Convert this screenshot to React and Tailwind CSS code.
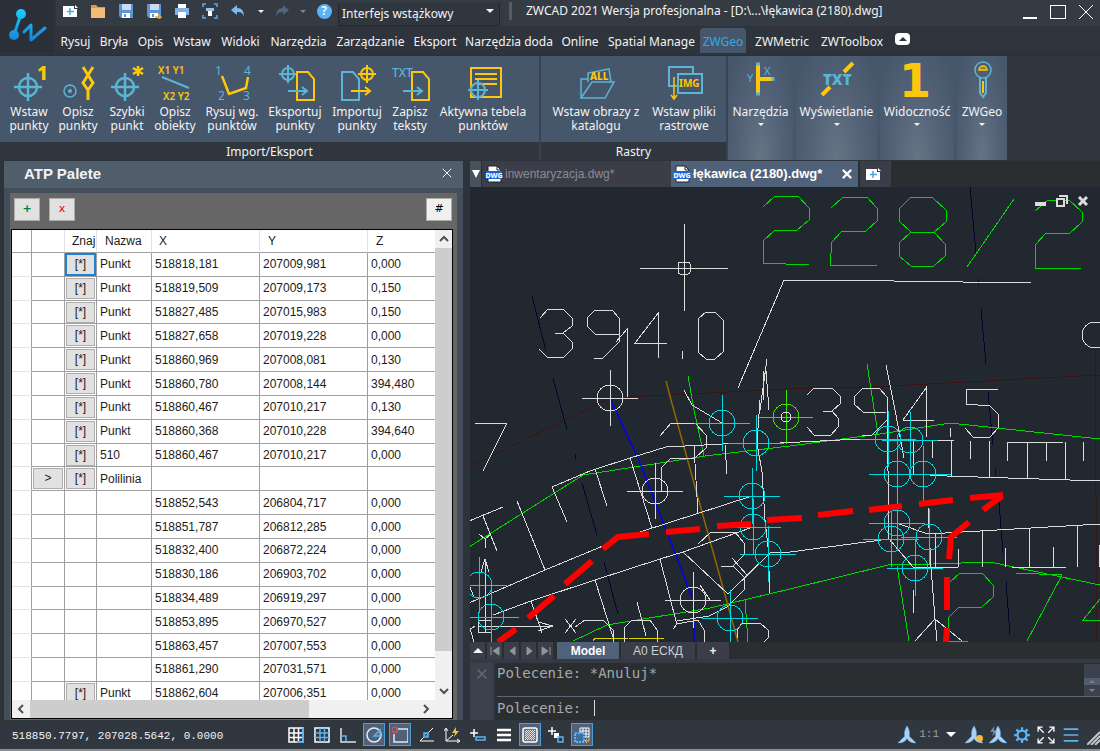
import { useState } from "react";
import clsx from "clsx";
import { Menu, X } from "lucide-react";

const BLUE = "#5bb5d5";
const GOLD = "#fdc70c";

const menuTabs = [
  { label: "Rysuj", width: "w-[39px]" },
  { label: "Bryła", width: "w-[38px]" },
  { label: "Opis", width: "w-[35px]" },
  { label: "Wstaw", width: "w-[48px]" },
  { label: "Widoki", width: "w-[49px]" },
  { label: "Narzędzia", width: "w-[67px]" },
  { label: "Zarządzanie", width: "w-[77px]" },
  { label: "Eksport", width: "w-[52px]" },
  { label: "Narzędzia doda", width: "w-[96px]" },
  { label: "Online", width: "w-[46px]" },
  { label: "Spatial Manage", width: "w-[97px]" },
  { label: "ZWGeo", width: "w-[46px]" },
  { label: "ZWMetric", width: "w-[72px]" },
  { label: "ZWToolbox", width: "w-[68px]" },
];

const rows = [
  ["Punkt", "518818,181", "207009,981", "0,000"],
  ["Punkt", "518819,509", "207009,173", "0,150"],
  ["Punkt", "518827,485", "207015,983", "0,150"],
  ["Punkt", "518827,658", "207019,228", "0,000"],
  ["Punkt", "518860,969", "207008,081", "0,130"],
  ["Punkt", "518860,780", "207008,144", "394,480"],
  ["Punkt", "518860,467", "207010,217", "0,130"],
  ["Punkt", "518860,368", "207010,228", "394,640"],
  ["510", "518860,467", "207010,217", "0,000"],
  ["Polilinia", "", "", ""],
  ["", "518852,543", "206804,717", "0,000"],
  ["", "518851,787", "206812,285", "0,000"],
  ["", "518832,400", "206872,224", "0,000"],
  ["", "518830,186", "206903,702", "0,000"],
  ["", "518834,489", "206919,297", "0,000"],
  ["", "518853,895", "206970,527", "0,000"],
  ["", "518863,457", "207007,553", "0,000"],
  ["", "518861,290", "207031,571", "0,000"],
  ["Punkt", "518862,604", "207006,351", "0,000"],
];

function Target({ x, y, r, arm, color = BLUE, width = 2 }) {
  return (
    <g stroke={color} strokeWidth={width} fill="none">
      <circle cx={x} cy={y} r={r} />
      <path d={`M${x - arm} ${y}H${x + arm}M${x} ${y - arm}V${y + arm}`} />
    </g>
  );
}

function Doc({ x, color }) {
  return <path d={`M${x} 8h11l6 7v21h-17z`} stroke={color} strokeWidth="2" fill="none" />;
}

function Arrow({ x, y, color }) {
  return (
    <path
      d={`M${x} ${y}h19m-5 -4l5 4l-5 4`}
      stroke={color}
      strokeWidth="2"
      fill="none"
    />
  );
}

function RibbonIcon({ children, height = 38 }) {
  return (
    <svg
      width="40"
      height={height}
      viewBox={`0 0 40 ${height}`}
      className="shrink-0 overflow-visible font-['Noto_Sans',sans-serif]"
      aria-hidden="true"
    >
      {children}
    </svg>
  );
}

const importTools = [
  {
    lines: ["Wstaw", "punkty"],
    width: "w-12",
    icon: (
      <>
        <Target x={19} y={23} r={9} arm={14} width={2.5} />
        <text x="28" y="16" fontSize="19" fontWeight="800" fill={GOLD}>1</text>
      </>
    ),
  },
  {
    lines: ["Opisz", "punkty"],
    width: "w-[50px]",
    icon: (
      <>
        <circle cx="12" cy="27" r="6" fill="none" stroke={BLUE} strokeWidth="1.5" />
        <circle cx="12" cy="27" r="2" fill={BLUE} />
        <path
          d="M25 3l5 8l5 -8M30 11l-5 8l5 7l5 -7zM30 26v10"
          fill="none"
          stroke={GOLD}
          strokeWidth="3"
        />
      </>
    ),
  },
  {
    lines: ["Szybki", "punkt"],
    width: "w-12",
    icon: (
      <>
        <Target x={18} y={23} r={9} arm={14} width={2.5} />
        <path d="M31 2v10M26 4l10 6M36 4l-10 6" stroke={GOLD} strokeWidth="2.5" />
      </>
    ),
  },
  {
    lines: ["Opisz", "obiekty"],
    width: "w-12",
    icon: (
      <>
        <text x="3" y="10" fontSize="10" fontWeight="600" fill={GOLD}>X1 Y1</text>
        <path d="M7 13l27 11" stroke={BLUE} strokeWidth="2" />
        <text x="8" y="36" fontSize="10" fontWeight="600" fill={GOLD}>X2 Y2</text>
      </>
    ),
  },
  {
    lines: ["Rysuj wg.", "punktów"],
    width: "w-[66px]",
    icon: (
      <>
        <path d="M10 12l7 18l17 -6l2 -11" fill="none" stroke={GOLD} strokeWidth="2.5" />
        <g fontSize="12" fill={BLUE}>
          <text x="3" y="11">1</text>
          <text x="32" y="11">4</text>
          <text x="6" y="36">2</text>
          <text x="31" y="36">3</text>
        </g>
      </>
    ),
  },
  {
    lines: ["Eksportuj", "punkty"],
    width: "w-[60px]",
    icon: (
      <>
        <Target x={13} y={10} r={6} arm={9} />
        <Doc x={22} color={GOLD} />
        <Arrow x={13} y={27} color={BLUE} />
      </>
    ),
  },
  {
    lines: ["Importuj", "punkty"],
    width: "w-16",
    icon: (
      <>
        <Doc x={5} color={BLUE} />
        <Target x={30} y={10} r={6} arm={9} color={GOLD} />
        <Arrow x={14} y={27} color={GOLD} />
      </>
    ),
  },
  {
    lines: ["Zapisz", "teksty"],
    width: "w-[42px]",
    icon: (
      <>
        <text x="2" y="13" fontSize="12" fontWeight="500" fill={BLUE}>TXT</text>
        <Doc x={22} color={GOLD} />
        <Arrow x={13} y={27} color={BLUE} />
      </>
    ),
  },
  {
    lines: ["Aktywna tebela", "punktów"],
    width: "w-[104px]",
    icon: (
      <>
        <path d="M8 4h30v29h-30zM12 10h22M12 15h22M16 20h18" fill="none" stroke={GOLD} strokeWidth="2" />
        <Target x={15} y={26} r={7} arm={10} />
      </>
    ),
  },
];

const rasterTools = [
  {
    lines: ["Wstaw obrazy z", "katalogu"],
    width: "w-[100px]",
    icon: (
      <>
        <path
          d="M12 18V9l21 -4l2 13M5 34V15h7M5 34l11 -16h22l-9 16z"
          fill="none"
          stroke={BLUE}
          strokeWidth="1.5"
        />
        <text x="14" y="16" fontSize="10" fontWeight="800" fill={GOLD}>ALL</text>
      </>
    ),
  },
  {
    lines: ["Wstaw pliki", "rastrowe"],
    width: "w-[76px]",
    icon: (
      <>
        <path d="M14 22h-9v-19h24v7M14 10h24v19h-24z" fill="none" stroke={BLUE} strokeWidth="2" />
        <text x="15" y="23" fontSize="10" fontWeight="700" fill={GOLD}>IMG</text>
        <path d="M10 13v22m-3 -4l3 4l3 -4" fill="none" stroke={GOLD} strokeWidth="1.5" />
      </>
    ),
  },
];

const collapsedPanels = [
  {
    label: "Narzędzia",
    width: "w-[65px]",
    icon: (
      <>
        <path d="M17 1v32M17 17h16" stroke={GOLD} strokeWidth="4" />
        <path d="M15 2h4M15 32h4M32 15v4" stroke={BLUE} strokeWidth="3" />
        <g fontSize="11" fill={BLUE}>
          <text x="6" y="20">Y</text>
          <text x="23" y="13">X</text>
        </g>
      </>
    ),
  },
  {
    label: "Wyświetlanie",
    width: "w-[81px]",
    icon: (
      <>
        <path d="M5 33l8 -8M27 10l9 -9" stroke={GOLD} strokeWidth="4" />
        <text x="6" y="23" fontSize="15" fontWeight="900" fill={BLUE}>TXT</text>
      </>
    ),
  },
  {
    label: "Widoczność",
    width: "w-[74px]",
    icon: (
      <text
        x="18"
        y="35"
        textAnchor="middle"
        fontSize="46"
        fontWeight="700"
        fill={GOLD}
        className="font-['DejaVu_Sans',sans-serif]"
      >
        1
      </text>
    ),
  },
  {
    label: "ZWGeo",
    width: "w-[50px]",
    icon: (
      <>
        <circle cx="21" cy="8" r="8" fill="none" stroke={BLUE} strokeWidth="1.5" />
        <path d="M17 8a4 4 0 0 1 8 0z" fill="#8a7f3c" stroke={GOLD} strokeWidth="1.5" />
        <path d="M18 16v15l3 4l3 -4V16" fill="none" stroke={BLUE} strokeWidth="2" />
        <path d="M21 19v12" stroke={GOLD} strokeWidth="2" />
      </>
    ),
  },
];

function ToolButton({ tool }) {
  return (
    <button className={clsx("flex shrink-0 flex-col items-center pt-2", tool.width)}>
      <RibbonIcon>{tool.icon}</RibbonIcon>
      <span className="mt-[3px] whitespace-nowrap text-xs leading-[14px]">
        {tool.lines[0]}
        <br />
        {tool.lines[1]}
      </span>
    </button>
  );
}

function RibbonPanel({ title, tools, className }) {
  return (
    <section className={clsx("flex flex-col border-r-2 border-[#39434f]", className)}>
      <div className="flex h-[86px] bg-[#46566b] px-[5px]">
        {tools.map((tool) => (
          <ToolButton key={tool.lines.join(" ")} tool={tool} />
        ))}
      </div>
      <h2 className="flex h-[18px] items-center justify-center bg-[#31373f] pt-[2px] text-xs">{title}</h2>
    </section>
  );
}

function Caret({ className, size = 8 }) {
  return (
    <svg width={size} height={size / 2} viewBox="0 0 8 4" className={className} aria-hidden="true">
      <path d="M0 0h8l-4 4z" fill="currentColor" />
    </svg>
  );
}

function QuickButton({ label, width = "w-7", children }) {
  return (
    <button aria-label={label} className={clsx("flex h-[22px] shrink-0 items-center justify-center", width)}>
      {children}
    </button>
  );
}

function Glyph({ children, size = 16 }) {
  return (
    <svg width={size} height={size} viewBox="0 0 16 16" fill="none" aria-hidden="true">
      {children}
    </svg>
  );
}

function NewFile() {
  return (
    <Glyph>
      <path d="M1 3h11v3h3v8H1z" fill="#fff" />
      <path d="M13 2l3 3h-3z" fill="#fff" />
      <path d="M8 5v7M5 8.500h7" stroke="#4aa5e8" strokeWidth="1.5" />
    </Glyph>
  );
}

function Floppy({ arrow }) {
  return (
    <Glyph>
      <path d="M1 1h14v14H3l-2 -2z" fill="#5c95d6" />
      <path d="M4 1h9v6H4z" fill="#c9dcf3" />
      <path d="M4 10h8v5H4z" fill="#fff" />
      <path d="M6 11h2v3H6z" fill="#5c95d6" />
      {arrow && <path d="M9 14h6m-3 -3l3 3l-3 3" stroke="#e0ad4a" strokeWidth="1.5" />}
    </Glyph>
  );
}

function Logo() {
  return (
    <svg width="54" height="52" viewBox="0 0 54 52" className="shrink-0 bg-[#2b3038]" aria-label="ZWCAD">
      <defs>
        <linearGradient id="logo" x1="0" y1="8" x2="0" y2="42" gradientUnits="userSpaceOnUse">
          <stop offset="0" stopColor="#14d4fb" />
          <stop offset="1" stopColor="#1b7fd6" />
        </linearGradient>
      </defs>
      <path
        d="M21 14L14 35M24 32l7 -7v15l14 -12"
        stroke="url(#logo)"
        strokeWidth="3"
        strokeLinecap="round"
        strokeLinejoin="round"
        fill="none"
      />
      <circle cx="21" cy="14" r="5" fill="url(#logo)" />
      <circle cx="14" cy="35" r="5" fill="url(#logo)" />
    </svg>
  );
}

function TitleBar() {
  return (
    <div className="flex h-[26px] bg-[#353b43]">
      <QuickButton label="Nowy"><NewFile /></QuickButton>
      <QuickButton label="Otwórz">
        <Glyph>
          <path d="M1 2h5l2 2h7v11H1z" fill="#d99a4e" />
          <path d="M1 5h14v10H1z" fill="#f6bb76" />
        </Glyph>
      </QuickButton>
      <QuickButton label="Zapisz"><Floppy /></QuickButton>
      <QuickButton label="Zapisz jako"><Floppy arrow /></QuickButton>
      <QuickButton label="Drukuj">
        <Glyph>
          <path d="M4 1h8v4H4z" fill="#fff" />
          <path d="M1 5h14v7H1z" fill="#7fb2e6" />
          <path d="M4 9h8v6H4z" fill="#fff" />
        </Glyph>
      </QuickButton>
      <QuickButton label="Podgląd wydruku">
        <Glyph>
          <path d="M1 4V1h3M12 1h3v3M15 12v3h-3M4 15H1v-3" stroke="#5da8e6" strokeWidth="1.5" />
          <path d="M4 5h8v3H4z" fill="#9cc4ea" />
          <path d="M6 8h4v5H6z" fill="#fff" />
        </Glyph>
      </QuickButton>
      <QuickButton label="Cofnij">
        <Glyph>
          <path d="M7 2v3c5 0 7 3 7 9c-1 -4 -3 -5 -7 -5v3L1 7z" fill="#7cb8f2" />
        </Glyph>
      </QuickButton>
      <QuickButton label="Lista cofania" width="w-[18px]"><Caret size={6} /></QuickButton>
      <QuickButton label="Ponów" width="w-6">
        <Glyph>
          <path d="M9 2v3c-5 0 -7 3 -7 9c1 -4 3 -5 7 -5v3l6 -5z" fill="#4e6580" />
        </Glyph>
      </QuickButton>
      <QuickButton label="Lista ponawiania" width="w-[18px]">
        <Caret size={6} className="text-[#7d838b]" />
      </QuickButton>
      <QuickButton label="Pomoc" width="w-6">
        <span className="flex h-[15px] w-[15px] items-center justify-center rounded-full bg-[#5cb2f5] text-xs font-bold">?</span>
      </QuickButton>
      <div className="relative ml-[2px] w-[162px] shrink-0">
        <select
          aria-label="Obszar roboczy"
          className="h-[23px] w-full appearance-none border border-t-0 border-[#23272d] bg-[#30363e] pl-[3px] text-xs outline-none"
        >
          <option>Interfejs wstążkowy</option>
        </select>
        <Caret className="pointer-events-none absolute top-[9px] right-[6px]" />
      </div>
      <span className="mt-[2px] ml-[9px] h-[18px] w-[3px] shrink-0 bg-[#565c64]" />
      <h1 className="ml-[14px] truncate text-xs leading-[22px]">
        ZWCAD 2021 Wersja profesjonalna - [D:\...\łękawica (2180).dwg]
      </h1>
      <div className="ml-auto flex h-[22px] shrink-0 items-center gap-[13px] pr-[7px] pt-[2px]">
        <button aria-label="Minimalizuj" className="h-[14px] w-[14px] border-b-2 border-white" />
        <button aria-label="Maksymalizuj" className="h-[14px] w-4 border border-white" />
        <button aria-label="Zamknij">
          <svg width="14" height="14" viewBox="0 0 14 14" aria-hidden="true">
            <path d="M0 0l14 14M14 0L0 14" stroke="#fff" />
          </svg>
        </button>
      </div>
    </div>
  );
}

function MenuBar({ active, onSelect }) {
  return (
    <nav className="flex h-[29px] items-center bg-[#2f343c] text-xs">
      {menuTabs.map((tab) => (
        <button
          key={tab.label}
          onClick={() => onSelect(tab.label)}
          className={clsx(
            "flex h-[25px] shrink-0 items-center justify-center whitespace-nowrap pt-[2px]",
            tab.width,
            tab.label === active && "rounded-t-sm bg-[#46566b] text-[#35a8e8]"
          )}
        >
          {tab.label}
        </button>
      ))}
      <button
        aria-label="Zwiń wstążkę"
        className="mb-[3px] ml-[9px] flex h-3 w-[15px] items-center justify-center rounded-sm bg-white text-[#2f343c]"
      >
        <Caret className="rotate-180" />
      </button>
    </nav>
  );
}

function Ribbon() {
  return (
    <div className="flex h-[105px] shrink-0 border-t border-[#2b3038] bg-[#31373f]">
      <RibbonPanel title="Import/Eksport" tools={importTools} className="w-[541px] shrink-0" />
      <RibbonPanel title="Rastry" tools={rasterTools} className="w-[187px] shrink-0" />
      <div className="flex gap-[3px] bg-[#46566b]">
        {collapsedPanels.map((panel) => (
          <button
            key={panel.label}
            className={clsx(
              "flex flex-col items-center bg-[radial-gradient(ellipse_at_bottom,#667485_0%,#526176_50%,#46566b_90%)] pt-[6px]",
              panel.width
            )}
          >
            <RibbonIcon height={40}>{panel.icon}</RibbonIcon>
            <span className="mt-[3px] whitespace-nowrap text-xs leading-[14px]">{panel.label}</span>
            <Caret size={6} className="mt-1" />
          </button>
        ))}
      </div>
    </div>
  );
}

function CellButton({ children, focused, label }) {
  return (
    <button
      aria-label={label}
      className={clsx(
        "block h-[21px] w-full border bg-[#e1e1e1] text-center leading-[19px]",
        focused ? "border-[#1f7fd0] outline outline-[#1f7fd0]" : "border-[#adadad]"
      )}
    >
      {children}
    </button>
  );
}

function PointTable() {
  const cell = "border-r border-b border-[#a0a0a0] p-0 pl-[3px]";
  return (
    <table className="h-[476px] w-full table-fixed border-separate border-spacing-0 text-left text-[#1c1c1c]">
      <colgroup>
        <col className="w-5" />
        <col className="w-[33px]" />
        <col className="w-8" />
        <col className="w-[55px]" />
        <col className="w-[108px]" />
        <col className="w-[108px]" />
        <col />
      </colgroup>
      <thead>
        <tr className="h-[23px] [&>th]:border-b [&>th]:border-[#a0a0a0] [&>th]:p-0 [&>th]:font-normal">
          <th className="border-r" />
          <th className="border-r border-r-[#e3e3e3]!" />
          <th className="overflow-hidden border-r border-r-[#e3e3e3]! pl-[7px]! whitespace-nowrap">Znaj</th>
          <th className="border-r border-r-[#e3e3e3]! pl-2!">Nazwa</th>
          <th className="border-r border-r-[#e3e3e3]! pl-[7px]!">X</th>
          <th className="border-r border-r-[#e3e3e3]! pl-2!">Y</th>
          <th className="pl-2!">Z</th>
        </tr>
      </thead>
      <tbody>
        {rows.map(([name, x, y, z], i) => (
          <tr key={i} className="h-[23px]">
            <td className="border-r border-b border-r-[#a0a0a0] border-b-[#e3e3e3] p-0" />
            <td className="border-r border-b border-[#a0a0a0] p-0 px-[1px]">
              {name === "Polilinia" && <CellButton label="Rozwiń">&gt;</CellButton>}
            </td>
            <td className="border-r border-b border-[#a0a0a0] p-0 px-[1px]">
              {name && <CellButton focused={i === 0} label="Znajdź">[*]</CellButton>}
            </td>
            <td className={cell}>{name}</td>
            <td className={cell}>{x}</td>
            <td className={cell}>{y}</td>
            <td className="border-b border-[#a0a0a0] p-0 pl-[3px]">{z}</td>
          </tr>
        ))}
      </tbody>
    </table>
  );
}

function Chevron({ turn }) {
  return (
    <svg width="10" height="10" viewBox="0 0 10 10" className={turn} aria-hidden="true">
      <path d="M1 7l4 -4l4 4" stroke="#505050" strokeWidth="2" fill="none" />
    </svg>
  );
}

function Palette() {
  return (
    <aside className="ml-1 flex w-[459px] shrink-0 flex-col bg-[#434e5a]">
      <header className="flex h-[27px] shrink-0 items-center justify-between bg-[#505d6a] pr-2 pl-5 font-['Liberation_Sans',sans-serif] text-[15px] font-bold">
        <h2>ATP Palete</h2>
        <button aria-label="Zamknij paletę" className="mb-1">
          <X size={16} strokeWidth={1.5} />
        </button>
      </header>
      <div className="mx-[6px] mt-[5px] flex min-h-0 flex-1 flex-col bg-[#666] pr-1 font-['Liberation_Sans',sans-serif] text-xs text-black">
        <div className="flex h-9 shrink-0 items-center gap-[9px] pr-[1px] pl-1 pb-1 font-['DejaVu_Sans',sans-serif] text-[11px]">
          <button className="h-[23px] w-[26px] border border-[#adadad] bg-[#e1e1e1] font-bold text-green-700">+</button>
          <button className="h-[23px] w-[26px] border border-[#adadad] bg-[#e1e1e1] text-red-600">x</button>
          <button className="ml-auto h-[23px] w-[26px] border border-[#adadad] bg-[#f0f0f0]">#</button>
        </div>
        <div className="mb-[1px] ml-[1px] flex min-h-0 flex-1 flex-col border border-black bg-white">
          <div className="flex min-h-0 flex-1">
            <div className="min-w-0 flex-1 overflow-hidden">
              <PointTable />
            </div>
            <div className="flex w-[17px] flex-col items-center bg-[#f0f0f0]">
              <button aria-label="W górę" className="flex h-[18px] w-full items-center justify-center"><Chevron /></button>
              <div className="w-full flex-[13] bg-[#cdcdcd]" />
              <div className="flex-1" />
              <button aria-label="W dół" className="flex h-[18px] w-full items-center justify-center"><Chevron turn="rotate-180" /></button>
            </div>
          </div>
          <div className="flex h-[18px] shrink-0 bg-[#f0f0f0] pr-[17px]">
            <button aria-label="W lewo" className="flex w-[18px] items-center justify-center"><Chevron turn="-rotate-90" /></button>
            <div className="flex-[72] bg-[#cdcdcd]" />
            <div className="flex-[28]" />
            <button aria-label="W prawo" className="flex w-[18px] items-center justify-center"><Chevron turn="rotate-90" /></button>
          </div>
        </div>
      </div>
    </aside>
  );
}

const cyanPoints = [
  [722, 423], [756, 443], [752, 496], [753, 527], [768, 554], [730, 618], [479, 585], [491, 617],
  [888, 439], [910, 440], [897, 474], [923, 474], [897, 523], [891, 539], [929, 537], [915, 568],
];

const whitePoints = [[610, 398], [655, 491], [693, 600]];

// polylines of each layer, in drawing units
const layers = [
  {
    color: "#3a1416",
    lines: [
      "469,467 606,400 627,397 790,389 870,387 1100,375",
      "1095,349 1097,642",
    ],
  },
  {
    color: "#04042e",
    lines: [
      "532,296 546,351", "553,378 567,430", "575,454 575,459", "582,483 597,535", "604,562 618,614",
      "970,187 976,253", "978,279 978,285", "981,309 986,364", "988,392 993,445", "995,469 995,475",
      "999,502 1003,553", "1006,581 1010,635",
    ],
  },
  {
    color: "#00d800",
    lines: [
      "763,207 775,196 798,196 809,208 809,220 797,230 775,230 763,241 763,263 809,265",
      "831,208 843,197 867,197 877,208 877,221 866,231 842,231 832,242 830,265 877,266",
      "911,197 933,198 946,210 946,222 934,232 945,244 945,256 934,266 911,266 899,256 899,243 911,232 899,221 899,209 911,197",
      "911,232 934,232",
      "1014,199 967,267",
      "1035,211 1048,200 1069,200 1082,212 1082,222 1069,234 1046,233 1035,245 1035,268 1081,268",
      "688,376 694,410 704,456",
      "469,547 583,475 705,456 790,446 880,434 950,423 1100,439",
      "573,641 607,625 710,608 790,589 888,565 933,564 990,562 1100,585",
      "745,600 748,642", "897,566 909,641", "867,364 878,434",
      "950,582 960,573 982,573 993,585 993,597 982,607 959,607 948,618 948,641 968,641",
      "1016,573 1062,575 1027,641", "1100,599 1083,620 1100,620",
    ],
  },
  {
    color: "#946600",
    smooth: true,
    lines: ["666,381 671,400 738,642"],
  },
  {
    color: "#0000f0",
    smooth: true,
    lines: ["610,398 640,463 692,597", "694,622 694,642"],
  },
  {
    color: "#d8d800",
    lines: ["593,641 595,638 628,638 664,639"],
  },
  {
    color: "#dcdcdc",
    lines: [
      // heights 394.0 and 394.5
      "540,318 548,309 564,310 572,318 572,326 563,333 555,333",
      "563,333 572,342 572,349 564,357 547,357 539,349",
      "619,334 595,334 587,326 587,318 595,310 612,310 619,318 619,342 603,358 594,358",
      "616,342 627,329 627,397",
      "667,343 635,343 659,312 658,359", "682,351 682,359",
      "698,319 706,312 715,312 723,320 723,352 715,359 706,359 698,352 698,319",
      "807,395 814,388 832,388 840,396 840,404 832,411 823,411",
      "832,411 838,418 838,427 831,435 814,435 807,427",
      "886,412 863,412 854,404 854,397 863,388 879,388 887,397 887,420 872,435 862,435",
      "934,421 903,420 926,388 926,437", "950,428 950,437",
      "998,389 966,389 966,404 990,406 998,414 998,428 990,437 973,437 965,428",
      // boundary
      "738,388 784,280 825,280 1031,283",
      "684,390 692,405 722,423",
      "760,410 767,359", "763,371 763,400", "766,371 769,410", "760,400 757,443 762,472 765,520 768,547 770,593",
      "475,423 507,423 483,471",
      "552,487 590,471 630,458 666,447 723,444 780,443 840,440 877,439", "883,440 954,440",
      "552,487 567,522", "595,469 607,506", "630,458 652,528", "694,446 698,514", "725,445 727,474",
      "469,521 503,507", "483,516 497,551", "517,501 545,570",
      "469,603 545,570 603,546", "640,532 752,496",
      "493,615 531,601 595,580 660,559 683,552 753,527",
      "531,601 542,633", "595,580 613,637", "660,559 677,625", "683,552 728,594", "637,602 646,636",
      "660,436 671,423 695,423 706,435 707,447 695,458 671,458 661,468 661,492",
      "698,544 711,532 735,532 744,543 744,555 733,566 721,566",
      "733,566 744,577 744,590 727,607 709,616 677,621",
      "732,558 747,575", "700,585 710,600", "728,594 770,553 790,552 889,539 913,567 958,567",
      "899,524 928,534 1100,524",
      "575,627 585,620 603,620 613,630 613,642", "624,642 624,628 632,620 650,620 657,630 657,642",
      "673,629 677,624 698,620 704,630 704,642", "737,638 737,630 742,623 760,623 768,630 768,638 764,642",
      "886,365 895,410 904,458", "887,400 889,540",
      // embankment hatch
      "913,441 913,474", "932,441 932,458", "951,441 951,476", "970,441 970,459", "989,441 989,477",
      "1007,461 1008,442 1063,442", "1027,442 1027,478", "1046,442 1046,461", "1065,442 1065,479",
      "1083,442 1083,461", "897,474 913,474 947,476 1100,481",
      "935,534 935,567", "958,549 958,567", "982,531 982,567", "1005,548 1005,567", "1029,529 1029,567",
      "1053,547 1053,567", "1077,525 1077,567", "1099,545 1099,567", "1012,567 1066,567",
      "928,508 931,567 935,619 937,641", "915,641 935,619 962,641", "913,590 913,613",
      // coordinate system mark
      "478,620 491,620 491,632 478,632 478,620", "478,626 553,626", "538,622 553,626 538,631",
      "485,632 485,560", "481,572 485,559 489,572", "479,534 485,539 491,534", "485,539 485,548",
      "565,619 576,633", "576,619 565,633", "469,630 475,626", "470,628 474,642", "469,585 474,597",
    ],
  },
];

const routeDashes = [
  "498,642 516,629", "528,618 554,596", "565,584 592,561", "603,549 618,537 649,534", "666,532 700,529",
  "717,526 751,524", "767,520 802,518", "818,515 853,511", "869,510 902,506", "919,504 953,500",
  "970,498 1003,495", "1002,496 983,510", "969,522 951,537 949,559", "947,577 947,610", "947,628 946,642",
];

function Drawing() {
  return (
    <div className="relative min-h-0 flex-1 overflow-hidden bg-[#222830]">
      <svg
        viewBox="470 187 630 455"
        preserveAspectRatio="xMinYMin slice"
        className="block h-full w-full"
        fill="none"
        aria-label="Rysunek łękawica (2180)"
      >
        {layers.map((layer) => (
          <g
            key={layer.color}
            stroke={layer.color}
            strokeWidth={layer.smooth ? 1.5 : 1}
            shapeRendering={layer.smooth ? "auto" : "crispEdges"}
          >
            {layer.lines.map((points) => (
              <polyline key={points} points={points} />
            ))}
          </g>
        ))}
        <g shapeRendering="crispEdges">
          <circle cx="1095" cy="335" r="13" stroke="#dcdcdc" />
          {whitePoints.map(([x, y]) => (
            <Target key={x} x={x} y={y} r={13} arm={28} color="#dcdcdc" width={1} />
          ))}
          {cyanPoints.map(([x, y]) => (
            <Target key={`${x}-${y}`} x={x} y={y} r={13} arm={28} color="#00d8e0" width={1} />
          ))}
          <Target x={786} y={417} r={13} arm={27} color="#3ee000" width={1} />
          <circle cx="786" cy="417" r="5" stroke="#dcdcdc" />
        </g>
        <g stroke="#ff0000" strokeWidth="6">
          {routeDashes.map((points) => (
            <polyline key={points} points={points} />
          ))}
        </g>
        <g stroke="#dcdcdc" shapeRendering="crispEdges">
          <path d="M640 268H728M684 224V311" />
          <rect x="678" y="262" width="12" height="12" rx="2" />
        </g>
      </svg>
      <div className="absolute top-2 right-3 flex items-center gap-[10px]">
        <button aria-label="Minimalizuj rysunek" className="mt-[6px] h-1 w-[11px] bg-[#dcdcdc]" />
        <button aria-label="Przywróć rysunek">
          <svg width="12" height="12" viewBox="0 0 12 12" aria-hidden="true">
            <path d="M3 1h8v8" stroke="#dcdcdc" strokeWidth="2" fill="none" />
            <path d="M1 4h7v7H1z" stroke="#dcdcdc" strokeWidth="2" fill="#222830" />
          </svg>
        </button>
        <button aria-label="Zamknij rysunek">
          <svg width="10" height="10" viewBox="0 0 10 10" aria-hidden="true">
            <path d="M1 1l8 8M9 1l-8 8" stroke="#dcdcdc" strokeWidth="3" />
          </svg>
        </button>
      </div>
    </div>
  );
}

function DwgIcon() {
  return (
    <svg width="18" height="18" viewBox="0 0 18 18" className="shrink-0 font-['Noto_Sans',sans-serif]" aria-hidden="true">
      <path d="M3 1h9l4 4v12H3z" fill="#fff" stroke="#222" />
      <path d="M12 1v4h4" fill="none" stroke="#222" />
      <path d="M1 6h16v8H1z" fill="#1764d8" />
      <text x="9" y="13" fontSize="7" fontWeight="800" fill="#fff" textAnchor="middle">DWG</text>
    </svg>
  );
}

function FileTabs() {
  return (
    <div className="flex h-[26px] shrink-0 bg-[#2b2e31] font-['Liberation_Sans',sans-serif]">
      <button aria-label="Lista rysunków" className="flex w-[11px] items-center justify-center bg-[#46525e]">
        <svg width="8" height="8" viewBox="0 0 8 8" aria-hidden="true">
          <path d="M0 0h8l-4 8z" fill="#fff" />
        </svg>
      </button>
      <button className="ml-[1px] flex w-[189px] items-center gap-[2px] bg-[#3b3e48] pl-[3px] text-xs text-[#878c96]">
        <DwgIcon />
        inwentaryzacja.dwg*
      </button>
      <div className="flex w-[187px] items-center bg-[#50627a] pr-1 pl-[2px] text-[13px] font-bold text-white">
        <button className="flex flex-1 items-center gap-[2px] whitespace-nowrap"><DwgIcon />łękawica (2180).dwg*</button>
        <button aria-label="Zamknij łękawica (2180).dwg"><X size={14} strokeWidth={4} /></button>
      </div>
      <button aria-label="Nowy rysunek" className="ml-[2px] flex w-[31px] items-center bg-[#3b3e48] pl-[5px]">
        <NewFile />
      </button>
    </div>
  );
}

function LayoutTabs() {
  const nav = [
    ["Pierwszy", "M1 1v8M9 1v8L3 5z"],
    ["Poprzedni", "M8 1v8L3 5z"],
    ["Następny", "M3 1v8l5 -4z"],
    ["Ostatni", "M9 1v8M1 1v8l6 -4z"],
  ];
  return (
    <div className="flex h-[17px] shrink-0 gap-[2px] bg-[#2b2e31] font-['Liberation_Sans',sans-serif] text-xs">
      <button aria-label="Lista arkuszy" className="flex w-[15px] items-center justify-center bg-[#3b3e48]">
        <Caret size={10} className="rotate-180" />
      </button>
      {nav.map(([label, d]) => (
        <button key={label} aria-label={label} className="flex w-[15px] items-center justify-center bg-[#3b3e48]">
          <svg width="10" height="10" viewBox="0 0 10 10" aria-hidden="true">
            <path d={d} fill="#8f959f" stroke="#8f959f" />
          </svg>
        </button>
      ))}
      <button className="ml-[2px] w-[62px] bg-[#50627a] font-bold text-white">Model</button>
      <button className="w-[74px] bg-[#3b3e48] text-[#c9ced6]">A0 ЕСКД</button>
      <button aria-label="Nowy arkusz" className="w-8 bg-[#3b3e48] font-bold">+</button>
    </div>
  );
}

function CommandLine() {
  const [command, setCommand] = useState("");
  return (
    <div className="mt-1 flex h-[57px] shrink-0 bg-[#2b2e31] font-['DejaVu_Sans_Mono',monospace] text-sm text-[#a4a9ae]">
      <button aria-label="Zamknij wiersz poleceń" className="flex w-[23px] justify-center bg-[#3b424e] pt-[3px] text-[#626a74]">
        <X size={16} />
      </button>
      <div className="flex min-w-0 flex-1 flex-col border-l-2 border-[#343a42] pl-[2px]">
        <div className="flex h-[34px] justify-between border-b border-[#5a6672]">
          <p className="leading-5">Polecenie: *Anuluj*</p>
          <div className="mt-[1px] flex w-4 flex-col items-center justify-end gap-1 bg-[#3b424e] pb-1 text-[#77818c]">
            <span className="flex h-[7px] w-full items-center justify-center bg-[#515d6a]"><Caret size={6} className="rotate-180" /></span>
            <Caret size={6} />
          </div>
        </div>
        <label className="flex flex-1 items-center whitespace-pre pb-[2px]">
          {"Polecenie: "}
          <span className="ml-1 h-4 w-px bg-[#d8dadc]" />
          <input
            value={command}
            onChange={(e) => setCommand(e.target.value)}
            className="min-w-0 flex-1 bg-transparent outline-none"
          />
        </label>
      </div>
    </div>
  );
}

const statusToggles = [
  { label: "Siatka skoku", icon: <><path d="M1 1h14v14H1zM1 6h14M1 10.500h14M6 1v14M10.500 1v14" stroke="#fff" strokeWidth="1.5" /><path d="M15 1v14H9" stroke="#5ab4f2" strokeWidth="2" /></> },
  { label: "Siatka", icon: <><path d="M1 1h14v14H1z" stroke="#fff" strokeWidth="1.5" /><path d="M1 6h14M1 10.500h14M6 1v14M10.500 1v14" stroke="#5ab4f2" strokeWidth="1.5" /></> },
  { label: "Orto", icon: <><path d="M1 1v14h15" stroke="#dfe3e8" strokeWidth="1.5" /><path d="M1 9h5v5" stroke="#5ab4f2" strokeWidth="1.5" /></> },
  { label: "Biegunowe", on: true, icon: <><circle cx="8" cy="8" r="7" stroke="#e6eef5" strokeWidth="1.5" /><path d="M8 9l6 -6v6z" stroke="#5ab4f2" strokeWidth="1.5" /></> },
  { label: "Obiekty", on: true, icon: <><path d="M6 2h10v13H2V7" stroke="#dfe6ee" strokeWidth="1.5" /><path d="M0 0h5v5H0z" stroke="#e05050" strokeWidth="1.5" /></> },
  { label: "Śledzenie", icon: <><path d="M15 1L2 14h14" stroke="#fff" /><path d="M6 6h4v4H6z" stroke="#5ab4f2" strokeWidth="1.5" fill="#2f6fa5" /></> },
  { label: "Dynamiczny LUW", icon: <><path d="M2 2v12h13M2 14l7 -6M0 4l2 -3l2 3M13 12l3 2l-3 2" stroke="#fff" /><path d="M12 0L8 6h3l-1 4l5 -6h-3z" fill="#f6bb3c" /></> },
  { label: "Wprowadzanie dynamiczne", icon: <><path d="M4 2v8M0 6h8" stroke="#fff" strokeWidth="1.5" /><path d="M6 10h9v3H6z" stroke="#5ab4f2" strokeWidth="1.5" /></> },
  { label: "Szerokość linii", icon: <path d="M1 3h14M1 8h14M1 13h14" stroke="#fff" strokeWidth="2.5" /> },
  { label: "Przezroczystość", on: true, icon: <><rect x="1" y="1" width="14" height="14" rx="2" fill="#70767d" stroke="#fff" strokeWidth="1.5" /><path d="M3 4.500h10M3 6.500h10M3 8.500h10M3 10.500h10M3 12.500h10" stroke="#e4e6e8" strokeDasharray="1 1" /><path d="M4 3.500h9M4 5.500h9M4 7.500h9M4 9.500h9M4 11.500h9" stroke="#e4e6e8" strokeDasharray="1 1" /></> },
  { label: "Cykl wyboru", icon: <><path d="M4 0v8M0 4h8" stroke="#fff" strokeWidth="1.5" /><path d="M6 6h5v5H6z" fill="#fff" /><path d="M10 10h5v5h-5z" stroke="#5ab4f2" strokeWidth="1.5" /></> },
  { label: "Szybkie właściwości", on: true, icon: <><path d="M6 1h9v9H6zM6 4h9M6 7h9M9 1v9M12 1v9" stroke="#fff" /><path d="M1 6h9v9H1z" fill="#3f6f9c" stroke="#5ab4f2" strokeWidth="2" strokeDasharray="2 1" /><path d="M15 10v4h-4m2 -2l-2 2l2 2" stroke="#f6bb3c" /></> },
];

function ScaleMark({ children }) {
  return (
    <Glyph size={18}>
      <path
        d="M8 0c2 3 2.500 6 2 9l6 6c-4 0 -6 -1 -8 -4c-2 3 -4 4 -8 4l6 -6c-.5 -3 0 -6 2 -9z"
        fill="#a9d2f8"
        stroke="#6cb2ef"
        strokeWidth=".5"
      />
      {children}
    </Glyph>
  );
}

function StatusBar() {
  return (
    <footer className="flex h-[31px] shrink-0 items-center border-b-2 border-[#8b8e91] bg-[#31373f] pl-3">
      <output className="w-[273px] shrink-0 pt-1 font-['Liberation_Mono',monospace] text-[11px] whitespace-nowrap">
        518850.7797, 207028.5642, 0.0000
      </output>
      <div className="flex gap-1">
        {statusToggles.map((toggle) => (
          <button
            key={toggle.label}
            aria-label={toggle.label}
            aria-pressed={Boolean(toggle.on)}
            className={clsx(
              "flex h-[23px] w-[22px] items-center justify-center border",
              toggle.on ? "border-[#4a9fdc] bg-[#50627a]" : "border-transparent"
            )}
          >
            <Glyph>{toggle.icon}</Glyph>
          </button>
        ))}
      </div>
      <div className="ml-auto flex items-center gap-[6px] text-[#5ab4f2]">
        <button className="flex items-center gap-[3px] font-['Liberation_Mono',monospace] text-[11px] text-[#9aa0a6]">
          <ScaleMark />
          1:1
          <Caret size={10} className="ml-1 text-white" />
        </button>
        <button aria-label="Widoczność opisów" className="ml-[3px]">
          <ScaleMark><circle cx="13" cy="11" r="3" fill="#f6bb3c" /></ScaleMark>
        </button>
        <button aria-label="Automatyczna skala">
          <ScaleMark><path d="M5 0L1 5h3l-1 4l4 -5H4z" fill="#7f97b5" /></ScaleMark>
        </button>
        <button aria-label="Ustawienia">
          <Glyph size={18}>
            <circle cx="8" cy="8" r="4" stroke="#5ab4f2" strokeWidth="2" />
            <path
              d="M8 1v3M8 12v3M1 8h3M12 8h3M3 3l2 2M11 11l2 2M13 3l-2 2M5 11l-2 2"
              stroke="#5ab4f2"
              strokeWidth="2"
            />
          </Glyph>
        </button>
        <button aria-label="Pełny ekran">
          <Glyph size={18}>
            <path d="M1 5V1h4M11 1h4v4M15 11v4h-4M5 15H1v-4M1 1l5 5M15 1l-5 5M15 15l-5 -5M1 15l5 -5" stroke="#fff" strokeWidth="1.2" />
          </Glyph>
        </button>
        <button aria-label="Menu"><Menu size={20} strokeWidth={2} /></button>
        <svg width="13" height="14" viewBox="0 0 13 14" className="self-end" aria-hidden="true">
          <path d="M0 14L13 1M4 14l9 -9M8 14l5 -5" stroke="#c4c7ca" strokeWidth="2" />
        </svg>
      </div>
    </footer>
  );
}

function App() {
  const [activeTab, setActiveTab] = useState("ZWGeo");

  return (
    <div className="flex h-screen flex-col overflow-hidden bg-[#2d333b] font-['Noto_Sans','Open_Sans',sans-serif] text-[#f2f3f5]">
      <div className="flex shrink-0">
        <Logo />
        <div className="min-w-0 flex-1 bg-[#2f343c] pl-[2px]">
          <TitleBar />
          <MenuBar active={activeTab} onSelect={setActiveTab} />
        </div>
      </div>
      <Ribbon />
      <main className="mt-[1px] flex min-h-0 flex-1">
        <Palette />
        <section className="ml-[7px] flex min-w-0 flex-1 flex-col bg-[#333a45]">
          <FileTabs />
          <Drawing />
          <LayoutTabs />
          <CommandLine />
        </section>
      </main>
      <StatusBar />
    </div>
  );
}

export default App;
